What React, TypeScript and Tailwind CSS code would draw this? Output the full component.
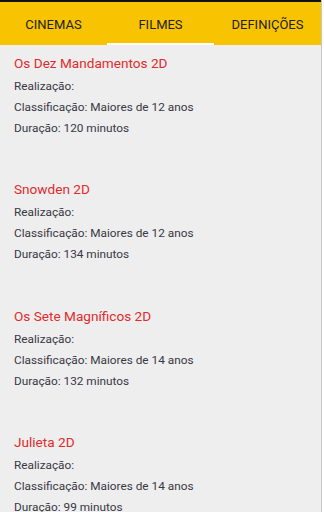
const tabs = ['CINEMAS', 'FILMES', 'DEFINIÇÕES'];

const filmes = [
  { title: 'Os Dez Mandamentos 2D', idade: 12, duracao: 120 },
  { title: 'Snowden 2D', idade: 12, duracao: 134 },
  { title: 'Os Sete Magníficos 2D', idade: 14, duracao: 132 },
  { title: 'Julieta 2D', idade: 14, duracao: 99 },
];

export default function App() {
  return (
    <div className="flex h-[512px] w-[324px] overflow-hidden bg-white font-['Roboto',sans-serif]">
      <div className="flex flex-1 flex-col overflow-hidden bg-[#eeeeee]">
        {/* Tabs */}
        <div className="h-[2px] shrink-0 bg-[#111]" />
        <div className="flex h-[43px] shrink-0 bg-[#f8c300]">
          {tabs.map((t) => (
            <div key={t} className="relative flex flex-1 items-center justify-center pt-[2px] text-[13px] text-[#222]">
              {t}
              {t === 'FILMES' && <div className="absolute bottom-0 left-0 right-0 h-[2px] bg-white" />}
            </div>
          ))}
        </div>

        {/* List */}
        <div className="flex shrink-0 flex-col px-[14px] pt-[8px]">
          {filmes.map((f) => (
            <div key={f.title} className="h-[126.4px] shrink-0">
              <p className="text-[13.6px] leading-[21px] text-[#e02b2b]">{f.title}</p>
              <div className="mt-[2px] text-[11.8px] leading-[21px] text-[#383844]">
                <p>Realização:</p>
                <p>Classificação: Maiores de {f.idade} anos</p>
                <p>Duração: {f.duracao} minutos</p>
              </div>
            </div>
          ))}
        </div>
      </div>
      <div className="w-[1px] bg-[#c8c8c8]" />
      <div className="w-[2px] bg-white" />
    </div>
  );
}
